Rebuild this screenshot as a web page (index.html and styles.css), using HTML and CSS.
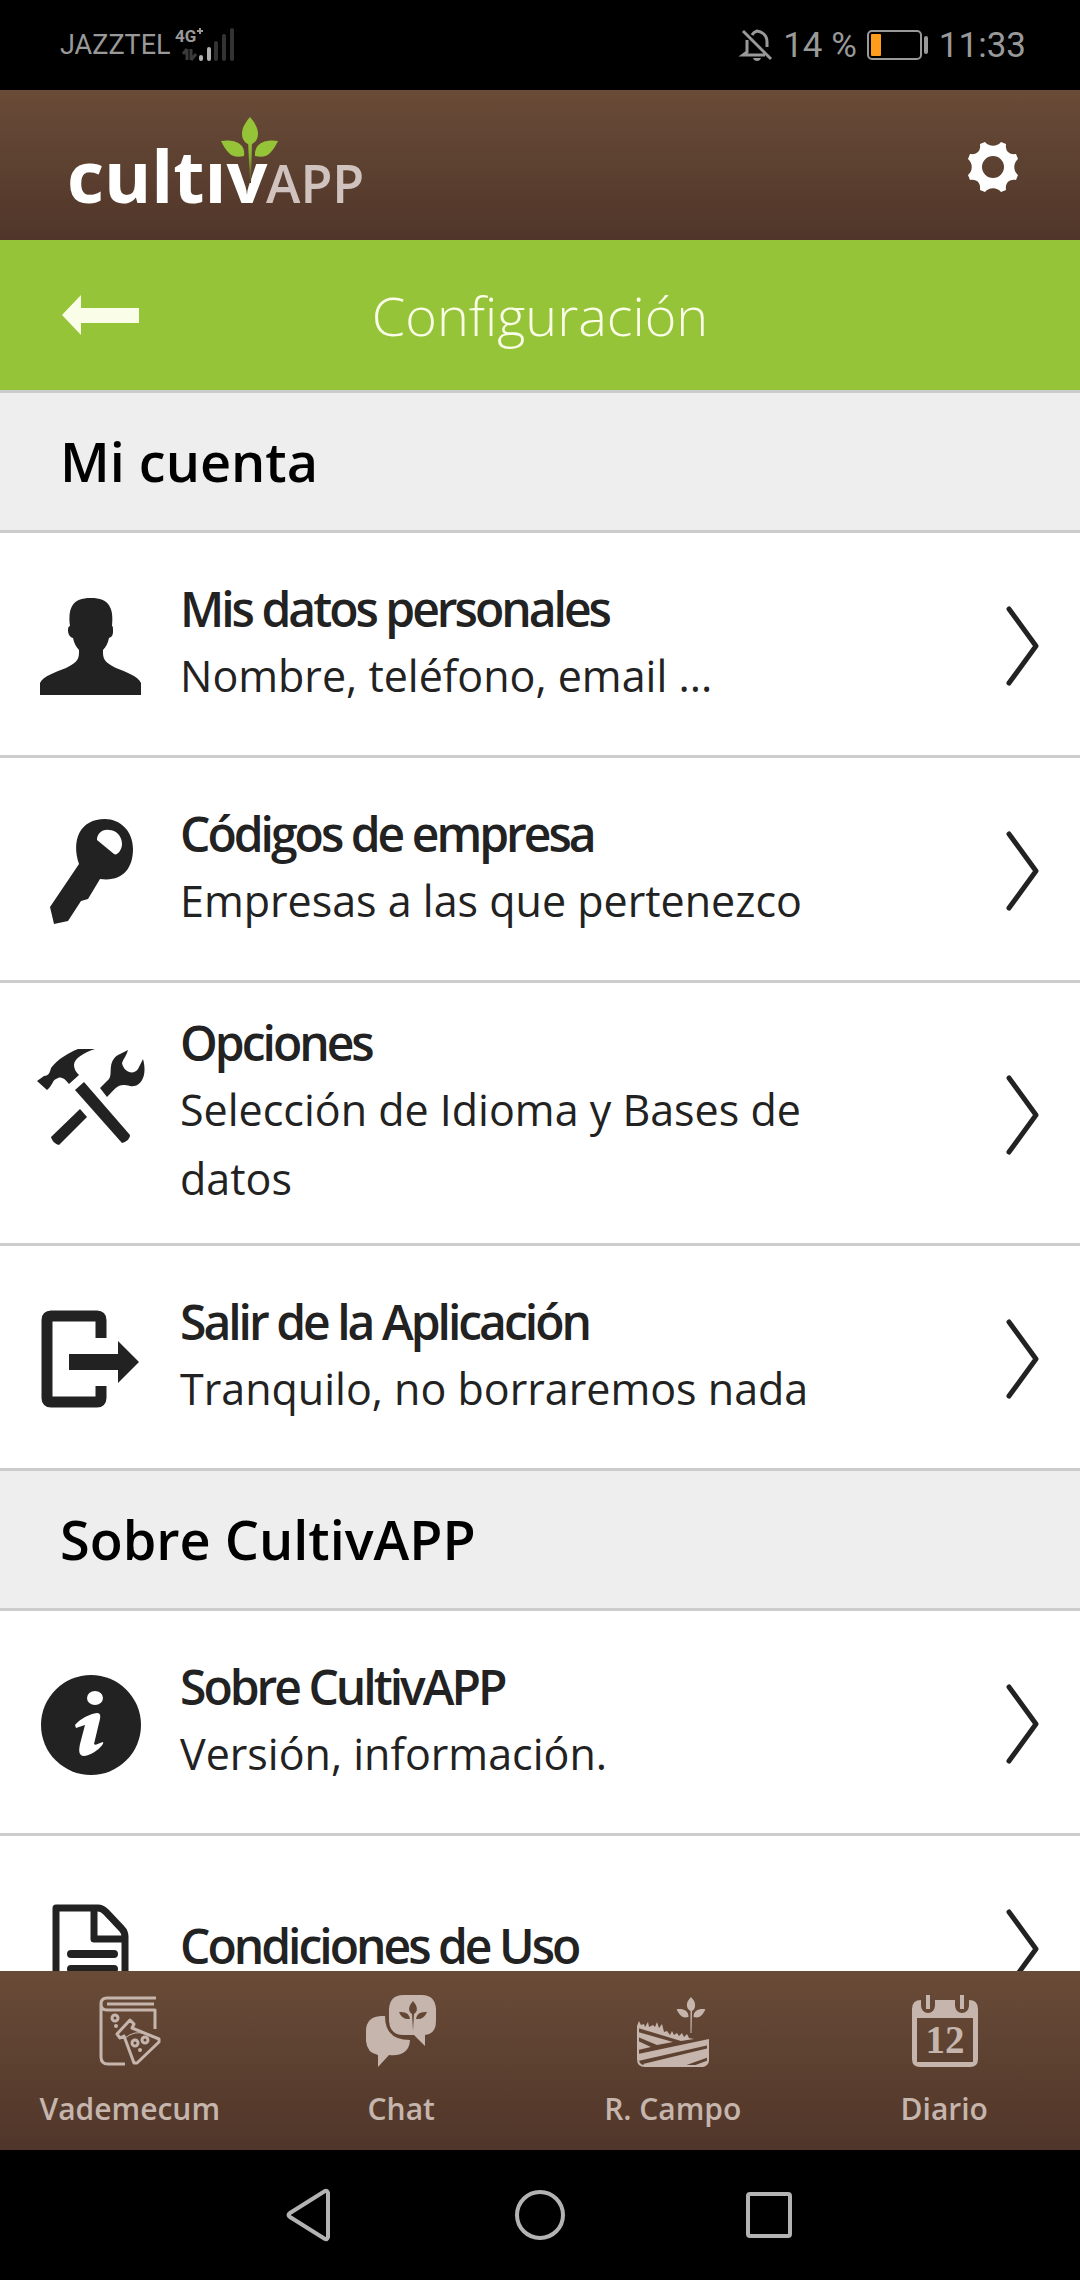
FILE: index.html
```html
<!DOCTYPE html>
<html lang="es">

<head>
    <meta charset="UTF-8">
    <meta name="viewport" content="width=device-width, initial-scale=1.0">
    <title>CultivAPP - Configuración</title>
    <link rel="stylesheet" href="styles.css">
</head>

<body>
    <!-- Shared shapes -->
    <svg class="symbols" aria-hidden="true">
        <linearGradient id="stem" x1="0" y1="0" x2="0" y2="1">
            <stop offset="0" stop-color="#96c438" />
            <stop offset="0.4" stop-color="#86ad35" />
            <stop offset="1" stop-color="#553c2b" />
        </linearGradient>
        <symbol id="chevron" viewBox="0 0 36 82">
            <path d="M4 4 L31 41 L4 78" fill="none" stroke="currentColor" stroke-width="5" stroke-linecap="round" stroke-linejoin="round" />
        </symbol>
        <symbol id="sprout" viewBox="0 0 56 70">
            <path d="M28 0 C22 6 20 11 20 16 C20 21 23 25 27 27 L27 70 L29 70 L30 27 C34 25 36 21 36 16 C36 11 34 6 28 0 Z" />
            <path d="M0 24 C10 22 24 25 23 39 C12 42 6 37 0 24 Z" />
            <path d="M56 24 C46 22 32 25 33 39 C44 42 50 37 56 24 Z" />
        </symbol>
    </svg>

    <div class="status-bar">
        <div class="status-left">
            <span class="carrier">JAZZTEL</span>
            <svg class="signal" viewBox="0 0 60 36" role="img" aria-label="4G+">
                <text class="signal-text" x="0" y="15">4G</text>
                <path d="M22 4h6M25 1v6" stroke="#999" stroke-width="2" />
                <path d="M12 22v11M12 22l-4 5M16 22v11M16 33l5-6" stroke="#3a3a3a" stroke-width="3" fill="none" />
                <path d="M26 30v2M34 22v10" stroke="#b0b0b0" stroke-width="4" stroke-linecap="round" />
                <path d="M41 16v16M49 9v23M57 3v29" stroke="#333" stroke-width="4" stroke-linecap="round" />
            </svg>
        </div>
        <div class="status-right">
            <svg class="bell" viewBox="0 0 32 34" aria-hidden="true">
                <path d="M2 3 L30 31 M6 12 V24 L2 27 H24 M11 7 C12 5 13 4 16 3 C22 4 26 8 26 14 V19" fill="none" stroke="#999" stroke-width="3" />
                <path d="M12 30h8c-1 4-7 4-8 0z" fill="#999" />
            </svg>
            <span>14 %</span>
            <svg class="battery" viewBox="0 0 62 30" aria-hidden="true">
                <rect x="1" y="1" width="53" height="28" rx="4" fill="none" stroke="#999" stroke-width="2" />
                <rect x="4" y="4" width="10" height="22" rx="1" fill="#ff9c1c" />
                <rect x="57" y="6" width="4" height="18" rx="2" fill="#999" />
            </svg>
            <span>11:33</span>
        </div>
    </div>

    <header class="app-header">
        <svg class="logo" viewBox="0 0 300 96" role="img" aria-label="cultivAPP">
            <text class="logo-name" x="-1" y="86">cultıv</text>
            <text class="logo-app" x="198" y="86">APP</text>
            <g class="logo-leaf">
                <path fill="url(#stem)" d="M180 24 H184 L183 66 H182 Z" />
                <path d="M182 0 C176 7 174 12 174 17 C174 22 177 26 180 27 H184 C188 25 190 21 190 17 C190 12 188 7 182 0 Z" />
                <path d="M153 24 C164 22 178 25 176 39 C164 42 159 36 153 24 Z" />
                <path d="M210 24 C199 22 186 25 187 39 C199 42 204 36 210 24 Z" />
            </g>
        </svg>
        <button class="settings" type="button" aria-label="Ajustes">
            <svg viewBox="0 0 52 52" aria-hidden="true">
                <path fill="currentColor" fill-rule="evenodd" d="M13 3 L18 1 C22 6 30 6 34 1 L39 3 C38 10 42 14 49 13 L51 18 C46 22 46 30 51 34 L49 39 C42 38 38 42 39 49 L34 51 C30 46 22 46 18 51 L13 49 C14 42 10 38 3 39 L1 34 C6 30 6 22 1 18 L3 13 C10 14 14 10 13 3 Z M26 15 A11 11 0 1 0 26 37 A11 11 0 1 0 26 15 Z" />
            </svg>
        </button>
    </header>

    <div class="title-bar">
        <button class="back" type="button" aria-label="Volver">
            <svg viewBox="0 0 78 40" aria-hidden="true">
                <path fill="currentColor" d="M0 20 L19 0 V13 H77 V28 H19 V40 Z" />
            </svg>
        </button>
        <h1>Configuración</h1>
    </div>

    <main class="content">
        <h2>Mi cuenta</h2>
        <ul class="options">
            <li>
                <a class="option" href="#datos">
                    <svg class="option-icon" viewBox="0 0 110 110" aria-hidden="true">
                        <path d="M4 105 V93 C7 86 20 82 30 78 C38 74 43 71 43 63 V60 C40 57 38 53 37 48 C33 47 32 43 32 40 C32 37 33 36 34 36 C32 18 36 8 55 8 C73 8 78 18 76 36 C77 36 77 38 77 41 C77 45 76 47 73 48 C72 53 70 57 67 60 V63 C67 71 72 74 80 78 C90 82 102 86 105 93 V105 Z" />
                    </svg>
                    <span class="option-text">
                        <strong>Mis datos personales</strong>
                        <span>Nombre, teléfono, email ...</span>
                    </span>
                    <svg class="chevron"><use href="#chevron" /></svg>
                </a>
            </li>
            <li>
                <a class="option" href="#codigos">
                    <svg class="option-icon" viewBox="0 0 110 110" aria-hidden="true">
                        <path fill-rule="evenodd" d="M69 4 C84 4 97 16 97 34 C97 54 86 67 64 64 L52 84 L45 86 L32 106 L18 109 L14 92 L43 49 C35 25 44 4 69 4 Z M73 15 C66 14 61 19 61 25 L78 39 C81 41 86 35 86 29 C86 21 80 15 73 15 Z" />
                    </svg>
                    <span class="option-text">
                        <strong>Códigos de empresa</strong>
                        <span>Empresas a las que pertenezco</span>
                    </span>
                    <svg class="chevron"><use href="#chevron" /></svg>
                </a>
            </li>
            <li>
                <a class="option" href="#opciones">
                    <svg class="option-icon" viewBox="0 -5 110 110" aria-hidden="true">
                        <path d="M1 36 L8 31 C12 31 14 28 15 23 C22 14 32 8 42 4 H59 C47 8 38 14 38 20 C38 24 40 27 43 30 L33 39 C28 32 24 31 20 34 C16 36 17 40 11 45 Z" />
                        <path d="M48 37 L94 90 C94 94 90 97 86 98 L39 45 Z" />
                        <path d="M44 64 L51 72 L23 100 C19 99 16 96 15 92 Z" />
                        <path d="M64 43 L73 34 C77 29 71 17 82 10 L92 5 C91 10 87 14 86 18 C88 28 98 30 102 24 L107 14 C112 32 104 43 94 41 C82 38 81 42 71 52 Z" />
                    </svg>
                    <span class="option-text">
                        <strong>Opciones</strong>
                        <span>Selección de Idioma y Bases de datos</span>
                    </span>
                    <svg class="chevron"><use href="#chevron" /></svg>
                </a>
            </li>
            <li>
                <a class="option" href="#salir">
                    <svg class="option-icon" viewBox="0 -1 110 110" aria-hidden="true">
                        <path d="M66 34 V16 Q66 12 62 12 H16 Q12 12 12 16 V94 Q12 98 16 98 H62 Q66 98 66 94 V82" transform="translate(-1 0)" fill="none" stroke="currentColor" stroke-width="11" />
                        <path d="M33 50 H82 V37 L103 58 L82 79 V66 H33 Z" />
                    </svg>
                    <span class="option-text">
                        <strong>Salir de la Aplicación</strong>
                        <span>Tranquilo, no borraremos nada</span>
                    </span>
                    <svg class="chevron"><use href="#chevron" /></svg>
                </a>
            </li>
        </ul>

        <h2>Sobre CultivAPP</h2>
        <ul class="options">
            <li>
                <a class="option" href="#sobre">
                    <svg class="option-icon" viewBox="0 -2 110 110" aria-hidden="true">
                        <circle cx="55" cy="55" r="50" />
                        <ellipse cx="59" cy="28" rx="8" ry="7" fill="#fff" />
                        <path fill="#fff" d="M39 55 C45 48 54 44 61 43 C66 43 64 49 63 53 L58 74 C60 76 63 73 67 72 C69 74 58 85 48 86 C42 86 43 79 44 74 L49 55 L40 58 Z" />
                    </svg>
                    <span class="option-text">
                        <strong>Sobre CultivAPP</strong>
                        <span>Versión, información.</span>
                    </span>
                    <svg class="chevron"><use href="#chevron" /></svg>
                </a>
            </li>
            <li>
                <a class="option" href="#condiciones">
                    <svg class="option-icon" viewBox="0 -8 110 110" aria-hidden="true">
                        <path d="M20 7 H62 Q66 7 70 11 L86 28 Q89 31 89 36 V98 H20 Z M58 8 V38 H88" fill="none" stroke="currentColor" stroke-width="7" stroke-linejoin="round" />
                        <path d="M35 53 H78 M35 68 H78 M35 83 H78" fill="none" stroke="currentColor" stroke-width="8" stroke-linecap="round" />
                    </svg>
                    <span class="option-text">
                        <strong>Condiciones de Uso</strong>
                    </span>
                    <svg class="chevron"><use href="#chevron" /></svg>
                </a>
            </li>
        </ul>
    </main>

    <nav class="tab-bar">
        <ul class="tabs">
            <li>
                <a href="#vademecum">
                    <svg viewBox="0 0 76 76" aria-hidden="true">
                        <g fill="none" stroke="currentColor" stroke-width="3" stroke-linejoin="round">
                            <path d="M64 5 H15 Q9 5 9 11 V64 Q9 71 16 71 H33 M9 11 Q9 17 15 17 H63 V36 M15 11 H62" />
                            <path d="M25 41 L38 27 L42 31 L40 35 L67 46 L67 49 L45 70 L42 70 L32 43 L28 45 Z" />
                            <path d="M33 45 Q43 37 53 41" stroke-width="1" />
                            <circle cx="23" cy="25" r="3" />
                            <circle cx="43" cy="50" r="3" />
                            <circle cx="53" cy="47" r="3" />
                        </g>
                        <circle cx="24" cy="33" r="2" />
                        <circle cx="48" cy="57" r="2" />
                    </svg>
                    <span>Vademecum</span>
                </a>
            </li>
            <li>
                <a href="#chat">
                    <svg viewBox="0 0 76 76" aria-hidden="true">
                        <path d="M22 23 H18 Q3 24 3 38 V48 Q4 60 15 62 V74 L26 62 Q46 64 47 47 Q22 47 22 23 Z" />
                        <path fill-rule="evenodd" d="M40 2 H59 Q72 2 73 16 V28 Q73 41 62 42 V53 L51 42 H40 Q27 42 26 28 V16 Q27 2 40 2 Z M50 8 C45 14 45 18 49 21 L50 38 L51 21 C55 18 55 14 50 8 Z M36 19 Q39 27 47 26 Q46 18 36 19 Z M64 19 Q61 27 53 26 Q54 18 64 19 Z" />
                    </svg>
                    <span>Chat</span>
                </a>
            </li>
            <li>
                <a href="#campo">
                    <svg viewBox="0 0 76 76" aria-hidden="true">
                        <use href="#sprout" x="39" y="4" width="34" height="36" />
                        <path d="M2 33 L4 28 L6 32 L9 31 L10 34 L13 29 L14 34 L18 32 L20 34 L22 29 L24 35 L27 31 L29 39 L32 38 L35 42 L37 38 L39 42 L42 40 L44 43 L47 40 L49 44 L52 41 L54 45 L59 46 L46 48 L3 35 Z" />
                        <path d="M3 39 L38 49 L22 52 L3 44 Z M3 48 L16 54 L3 57 Z M3 61 L74 46 V52 L3 68 Z M8 71 L74 55 V64 L46 74 H12 Z M55 74 L74 67 Q73 74 66 74 Z" />
                        <path d="M3 33 V66 Q3 73 10 73 H66 Q73 73 73 66 V47" fill="none" stroke="currentColor" stroke-width="2" />
                    </svg>
                    <span>R. Campo</span>
                </a>
            </li>
            <li>
                <a href="#diario">
                    <svg viewBox="-1 0 76 76" aria-hidden="true">
                        <path fill-rule="evenodd" d="M14 7 V13 Q15 20 21 20 Q27 20 28 13 V7 H48 V13 Q49 20 55 20 Q61 20 62 13 V7 Q71 7 71 16 V66 Q71 74 63 74 H13 Q5 74 5 66 V16 Q5 7 14 7 Z M10 25 V69 H66 V25 Z" />
                        <path d="M19 2 H23 V16 H19 Z M53 2 H57 V16 H53 Z" />
                        <text class="day" x="38" y="60">12</text>
                    </svg>
                    <span>Diario</span>
                </a>
            </li>
        </ul>
    </nav>

    <div class="system-nav">
        <button type="button" aria-label="Atrás">
            <svg viewBox="0 0 52 52" aria-hidden="true">
                <path d="M43 4 V48 Q42 51 40 50 L5 28 Q2 26 5 24 L40 2 Q42 1 43 4 Z" />
            </svg>
        </button>
        <button type="button" aria-label="Inicio">
            <svg viewBox="0 0 52 52" aria-hidden="true">
                <circle cx="26" cy="26" r="23" />
            </svg>
        </button>
        <button type="button" aria-label="Recientes">
            <svg viewBox="0 0 52 52" aria-hidden="true">
                <rect x="5" y="5" width="42" height="42" rx="2" />
            </svg>
        </button>
    </div>
</body>

</html>
```
FILE: styles.css
```css
* {
    box-sizing: border-box;
}

body {
    display: flex;
    flex-direction: column;
    height: 100vh;
    margin: 0;
    background-color: #fff;
    color: #222;
    font-family: "Open Sans", sans-serif;
}

ul {
    margin: 0;
    padding: 0;
    list-style: none;
}

a {
    color: inherit;
    text-decoration: none;
}

button {
    display: flex;
    padding: 0;
    border: none;
    background: none;
    color: inherit;
    cursor: pointer;
}

svg {
    display: block;
    flex: none;
    overflow: visible;
    fill: currentColor;
}

.symbols {
    position: absolute;
    width: 0;
    height: 0;
}

/* Phone status bar */
.status-bar {
    display: flex;
    flex: none;
    align-items: center;
    justify-content: space-between;
    height: 90px;
    padding: 0 54px 0 60px;
    background-color: #000;
    color: #999;
    font-family: Roboto, sans-serif;
    font-size: 35px;
}

.status-left,
.status-right {
    display: flex;
    align-items: center;
}

.status-left {
    gap: 4px;
}

.status-right {
    gap: 10px;
}

.carrier {
    font-size: 27px;
}

.signal {
    width: 60px;
    height: 36px;
}

.signal-text {
    fill: #999;
    font-size: 17px;
    font-weight: 700;
}

.bell {
    width: 32px;
    height: 34px;
}

.battery {
    width: 62px;
    height: 30px;
}

/* App header */
.app-header {
    display: flex;
    flex: none;
    align-items: center;
    justify-content: space-between;
    height: 150px;
    padding: 0 61px 0 68px;
    background: linear-gradient(#694b37, #50362a);
    color: #fff;
}

.logo {
    width: 300px;
    height: 96px;
}

.logo-name {
    fill: #fff;
    font-size: 72px;
    font-weight: 700;
}

.logo-app {
    fill: #d0c3bf;
    font-size: 52px;
    font-weight: 600;
}

.logo-leaf {
    fill: #96c438;
}

.settings {
    margin-top: 4px;
}

.settings svg {
    width: 52px;
    height: 52px;
}

.title-bar {
    display: grid;
    flex: none;
    grid-template-columns: 1fr auto 1fr;
    align-items: center;
    height: 150px;
    padding: 0 62px;
    background-color: #96c438;
    color: #fafde8;
}

.title-bar h1 {
    margin: 0;
    font-size: 54px;
    font-weight: 300;
}

.back svg {
    width: 78px;
    height: 40px;
}

/* Options list */
.content {
    flex: 1;
    min-height: 0;
    overflow: hidden;
    border-top: 3px solid #ccc;
}

.content h2 {
    margin: 0;
    padding: 32px 60px;
    border-bottom: 3px solid #ccc;
    background-color: #eee;
    color: #000;
    font-size: 54px;
    font-weight: 600;
    line-height: 73px;
}

.option {
    display: flex;
    align-items: center;
    gap: 34px;
    min-height: 225px;
    padding: 27px 39px 30px 36px;
    border-bottom: 3px solid #ccc;
}

/* Icons hang from the top of the row, whatever the text height */
.option-icon {
    align-self: flex-start;
    width: 110px;
    height: 110px;
    margin-top: 30px;
}

.option-text {
    display: flex;
    flex: 1;
    flex-direction: column;
    padding-right: 160px;
    font-size: 43px;
    line-height: 69px;
}

.option-text strong {
    font-size: 48px;
    font-weight: 600;
    letter-spacing: -3px;
    line-height: 65px;
}

.chevron {
    width: 36px;
    height: 82px;
    margin-top: 6px;
}

/* Bottom tabs */
.tab-bar {
    flex: none;
    height: 179px;
    overflow: hidden;
    background: linear-gradient(#694b37, #50362a);
    color: #c5b5ac;
}

.tabs {
    display: grid;
    grid-template-columns: repeat(4, 1fr);
    margin-left: -6px;
}

.tabs a {
    display: flex;
    flex-direction: column;
    align-items: center;
    gap: 19px;
    padding-top: 22px;
    font-size: 30px;
    font-weight: 600;
    line-height: 42px;
}

.tabs svg {
    width: 76px;
    height: 76px;
}

.day {
    font-family: "Liberation Serif", serif;
    font-size: 39px;
    font-weight: 700;
    text-anchor: middle;
}

/* Phone navigation */
.system-nav {
    display: flex;
    flex: none;
    align-items: center;
    justify-content: center;
    gap: 177px;
    height: 130px;
    background-color: #000;
    color: #b3b3b3;
}

.system-nav svg {
    width: 52px;
    height: 52px;
    fill: none;
    stroke: currentColor;
    stroke-width: 4;
}
```
